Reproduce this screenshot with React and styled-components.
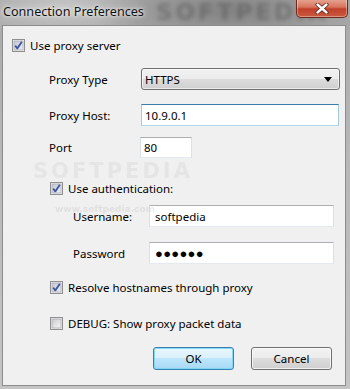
import React from 'react';
import styled, { createGlobalStyle } from 'styled-components';

const GlobalStyle = createGlobalStyle`
  html, body { margin: 0; padding: 0; background: #b9b9b9; }
  body { font-family: "Noto Sans", "Open Sans", sans-serif; }
`;

const Window = styled.div`
  position: relative;
  width: 350px;
  height: 389px;
  overflow: hidden;
  display: flex;
  flex-direction: column;
  background:
    radial-gradient(ellipse 90px 30px at 60px 8px, rgba(255,255,255,0.35), transparent),
    radial-gradient(ellipse 140px 40px at 230px 12px, rgba(60,60,60,0.35), transparent),
    linear-gradient(180deg, #a9a9a9 0%, #b7b7b7 40%, #c4c4c4 100%);
`;

const TitleBar = styled.div`
  position: relative;
  height: 25px;
  flex: none;
  display: flex;
  align-items: flex-start;
`;

const Caption = styled.div`
  position: relative;
  padding: 3px 0 0 3px;
  font-size: 12.6px;
  color: #111;
  text-shadow: 0 0 6px rgba(255,255,255,0.9), 0 0 3px rgba(255,255,255,0.9);
`;

const Watermark = styled.div`
  position: absolute;
  left: ${p => p.x}px;
  top: ${p => p.y}px;
  font-family: "DejaVu Sans", sans-serif;
  font-weight: bold;
  font-size: ${p => p.size}px;
  line-height: 1;
  letter-spacing: ${p => p.spacing}px;
  color: ${p => p.color};
  filter: blur(${p => p.blur}px);
  pointer-events: none;
  white-space: nowrap;
`;

const CloseButton = styled.div`
  position: absolute;
  left: 296px;
  top: -1px;
  width: 50px;
  height: 18px;
  border: 1px solid #6e2a1e;
  border-top: none;
  border-radius: 0 0 5px 5px;
  background: linear-gradient(180deg, #e6a895 0%, #d8735c 45%, #c1402a 55%, #c95a3f 100%);
  box-shadow: inset 0 0 0 1px rgba(255,255,255,0.35);
  display: flex;
  align-items: center;
  justify-content: center;
`;

const Body = styled.div`
  position: relative;
  flex: none;
  height: 359px;
  margin: 0 4px 3px 2px;
  border: 1px solid #8c8c8c;
  background: #f0f0f0;
  display: flex;
  flex-direction: column;
  padding-left: 9px;
  font-size: 11.5px;
  color: #000;
`;

const CheckRow = styled.label`
  display: flex;
  align-items: center;
  gap: 5px;
  height: 16px;
  margin-top: ${p => p.mt}px;
  margin-left: ${p => p.indent || 0}px;
  white-space: nowrap;
`;

const FieldRow = styled.div`
  display: flex;
  align-items: center;
  height: ${p => p.h || 22}px;
  margin-top: ${p => p.mt}px;
  margin-left: ${p => p.indent}px;
`;

const Label = styled.span`
  width: ${p => p.w}px;
  flex: none;
  white-space: nowrap;
`;

const TextBox = styled.input`
  box-sizing: border-box;
  width: ${p => p.w}px;
  height: 100%;
  margin: 0;
  padding: 0 0 0 ${p => p.pad || 3}px;
  font-family: "Noto Sans", "Open Sans", sans-serif;
  font-size: 11.5px;
  color: #000;
  background: #fff;
  outline: none;
  border: 1px solid;
  border-color: ${p => p.focused
    ? '#3d7bad #a4c9e3 #b7d9ed #a4c9e3'
    : '#abadb3 #dbdfe6 #e3e9ef #dbdfe6'};
`;

const Secret = styled(TextBox)`
  font-size: 13px;
  letter-spacing: 0.3px;
`;

const Select = styled.div`
  box-sizing: border-box;
  width: 199px;
  height: 100%;
  border: 1px solid #707070;
  border-radius: 3px;
  background: linear-gradient(180deg, #f2f2f2 0%, #ebebeb 50%, #dddddd 50%, #cfcfcf 100%);
  box-shadow: inset 0 0 0 1px rgba(255,255,255,0.6);
  display: flex;
  align-items: center;
  justify-content: space-between;
  padding: 0 7px 0 3px;
`;

const Buttons = styled.div`
  display: flex;
  gap: 17px;
  margin-top: 16px;
  margin-left: 141px;
`;

const Button = styled.button`
  box-sizing: border-box;
  width: 81px;
  height: 23px;
  margin: 0;
  padding: 0;
  font-family: "Noto Sans", "Open Sans", sans-serif;
  font-size: 11.5px;
  color: #000;
  border-radius: 3px;
  border: 1px solid ${p => p.primary ? '#3c7fb1' : '#707070'};
  background: ${p => p.primary
    ? 'linear-gradient(180deg, #eaf6fd 0%, #d9f0fc 50%, #bee6fd 50%, #a7d9f5 100%)'
    : 'linear-gradient(180deg, #f2f2f2 0%, #ebebeb 50%, #dddddd 50%, #cfcfcf 100%)'};
  box-shadow: inset 0 0 0 1px ${p => p.primary ? 'rgba(120,215,245,0.9)' : 'rgba(255,255,255,0.7)'};
`;

const CheckBox = ({ checked }) => (
  <svg width="13" height="13" viewBox="0 0 13 13" style={{ flex: 'none' }}>
    <defs>
      <linearGradient id={checked ? 'cbOn' : 'cbOff'} x1="0" y1="0" x2="1" y2="1">
        <stop offset="0" stopColor={checked ? '#c3c7d2' : '#cbcbcb'} />
        <stop offset="1" stopColor={checked ? '#eef0f6' : '#f6f6f6'} />
      </linearGradient>
    </defs>
    <rect x="0.5" y="0.5" width="12" height="12" fill="#f4f4f4" stroke="#8f8f8f" />
    <rect x="2" y="2" width="9" height="9" fill={`url(#${checked ? 'cbOn' : 'cbOff'})`} stroke="#a9abb3" strokeWidth="0.8" />
    {checked && (
      <path d="M3.2 6.6 L5.3 9.4 L9.8 2.8" fill="none" stroke="#3f55a0" strokeWidth="1.8" strokeLinejoin="round" />
    )}
  </svg>
);

export default function App() {
  return (
    <>
      <GlobalStyle />
      <Window>
        <TitleBar>
          <Watermark x={156} y={1} size={23} spacing={3} color="rgba(70,70,70,0.4)" blur={2}>SOFTPEDIA</Watermark>
          <Caption>Connection Preferences</Caption>
          <CloseButton>
            <svg width="14" height="11" viewBox="0 0 14 11">
              <path d="M2.5 1.5 L11.5 9.5 M11.5 1.5 L2.5 9.5" stroke="#5a1d14" strokeWidth="4" strokeLinecap="round" />
              <path d="M2.5 1.5 L11.5 9.5 M11.5 1.5 L2.5 9.5" stroke="#fff" strokeWidth="2.4" strokeLinecap="round" />
            </svg>
          </CloseButton>
        </TitleBar>
        <Body>
          <Watermark x={30} y={135} size={21} spacing={3} color="rgba(160,160,160,0.14)" blur={0.6}>SOFTPEDIA</Watermark>
          <Watermark x={52} y={179} size={9} spacing={0} color="rgba(160,160,160,0.2)" blur={0.3}>www.softpedia.com</Watermark>

          <CheckRow mt={11}>
            <CheckBox checked />
            <span>Use proxy server</span>
          </CheckRow>

          <FieldRow mt={15} indent={37}>
            <Label w={92}>Proxy Type</Label>
            <Select>
              <span>HTTPS</span>
              <svg width="8" height="5" viewBox="0 0 8 5"><path d="M0 0 H8 L4 5 Z" fill="#000" /></svg>
            </Select>
          </FieldRow>

          <FieldRow mt={14} indent={37}>
            <Label w={92}>Proxy Host:</Label>
            <TextBox w={198} focused readOnly defaultValue="10.9.0.1" />
          </FieldRow>

          <FieldRow mt={11} h={21} indent={37}>
            <Label w={91}>Port</Label>
            <TextBox w={52} readOnly defaultValue="80" />
          </FieldRow>

          <CheckRow mt={22} indent={38}>
            <CheckBox checked />
            <span>Use authentication:</span>
          </CheckRow>

          <FieldRow mt={9} indent={61}>
            <Label w={76}>Username:</Label>
            <TextBox w={185} pad={5} readOnly defaultValue="softpedia" />
          </FieldRow>

          <FieldRow mt={15} indent={61}>
            <Label w={76}>Password</Label>
            <Secret w={185} pad={5} readOnly defaultValue="●●●●●●" />
          </FieldRow>

          <CheckRow mt={15} indent={38}>
            <CheckBox checked />
            <span>Resolve hostnames through proxy</span>
          </CheckRow>

          <CheckRow mt={20} indent={38}>
            <CheckBox />
            <span>DEBUG: Show proxy packet data</span>
          </CheckRow>

          <Buttons>
            <Button primary>OK</Button>
            <Button>Cancel</Button>
          </Buttons>
        </Body>
      </Window>
    </>
  );
}
